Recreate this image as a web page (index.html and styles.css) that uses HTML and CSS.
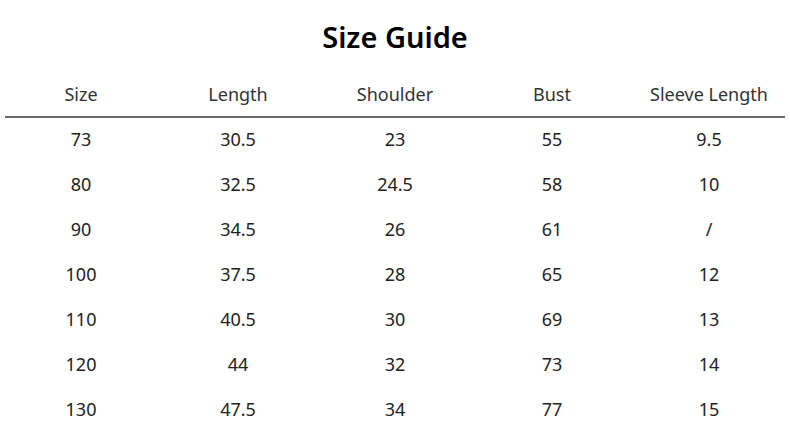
FILE: index.html
```html
<!DOCTYPE html>
<html>
<head>
<meta charset="utf-8">
<link rel="stylesheet" href="styles.css">
</head>
<body>
<div class="page">
  <h1 class="title">Size Guide</h1>
  <div class="row head">
    <div>Size</div><div>Length</div><div>Shoulder</div><div>Bust</div><div>Sleeve Length</div>
  </div>
  <div class="divider"></div>
  <div class="row"><div>73</div><div>30.5</div><div>23</div><div>55</div><div>9.5</div></div>
  <div class="row"><div>80</div><div>32.5</div><div>24.5</div><div>58</div><div>10</div></div>
  <div class="row"><div>90</div><div>34.5</div><div>26</div><div>61</div><div>/</div></div>
  <div class="row"><div>100</div><div>37.5</div><div>28</div><div>65</div><div>12</div></div>
  <div class="row"><div>110</div><div>40.5</div><div>30</div><div>69</div><div>13</div></div>
  <div class="row"><div>120</div><div>44</div><div>32</div><div>73</div><div>14</div></div>
  <div class="row"><div>130</div><div>47.5</div><div>34</div><div>77</div><div>15</div></div>
</div>
</body>
</html>
```
FILE: styles.css
```css
html, body {
  margin: 0;
  padding: 0;
  background: #ffffff;
}
.page {
  width: 790px;
  height: 445px;
  overflow: hidden;
  font-family: "Noto Sans", "Open Sans", sans-serif;
  color: #222222;
}
.title {
  margin: 0;
  padding: 17px 0 14px;
  font-size: 29px;
  line-height: 40px;
  font-weight: 600;
  text-align: center;
  color: #000000;
}
.row {
  display: grid;
  grid-template-columns: repeat(5, 157px);
  padding-left: 2.5px;
  height: 45px;
  font-size: 18px;
  line-height: 43px;
  text-align: center;
}
.row.head {
  line-height: 46px;
  color: #333333;
}
.divider {
  margin: 0 5px;
  height: 1.5px;
  background: #666666;
}
```
